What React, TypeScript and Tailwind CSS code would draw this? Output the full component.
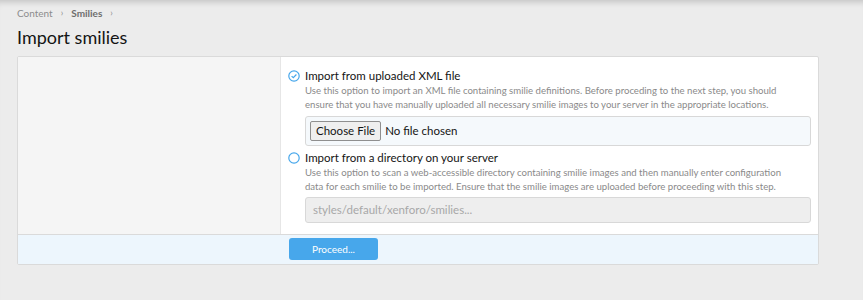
import React from "react";

const font = { fontFamily: 'Lato, "Open Sans", sans-serif' };

const CheckedRadio = () => (
  <svg width="12" height="12" viewBox="0 0 12 12" className="shrink-0">
    <circle cx="6" cy="6" r="5.2" fill="none" stroke="#47a7eb" strokeWidth="1.2" />
    <path d="M3.6 6.1 L5.3 7.7 L8.4 4.5" fill="none" stroke="#47a7eb" strokeWidth="1.2" />
  </svg>
);

const EmptyRadio = () => (
  <svg width="12" height="12" viewBox="0 0 12 12" className="shrink-0">
    <circle cx="6" cy="6" r="5.2" fill="none" stroke="#47a7eb" strokeWidth="1.2" />
  </svg>
);

export default function App() {
  return (
    <div
      className="min-h-[300px] bg-[#ececec] px-[17px] pt-[6px] shadow-[inset_0_7px_6px_-5px_rgba(0,0,0,0.18)]"
      style={font}
    >
      <div className="flex items-center gap-[8px] text-[10px] leading-[14px] text-[#8c8c8c]">
        <span>Content</span>
        <span className="text-[9px]">›</span>
        <span className="font-bold text-[#6e6e6e]">Smilies</span>
        <span className="text-[9px]">›</span>
      </div>
      <h1 className="mt-[5px] text-[18px] leading-[24px] text-[#141414]">Import smilies</h1>

      <div className="mt-[7px] w-[802px] overflow-hidden rounded-[2px] border border-[#dadada] bg-white">
        <div className="flex">
          <div className="w-[263px] shrink-0 border-r border-[#e6e6e6] bg-[#f5f5f5]" />
          <div className="min-w-0 flex-1 pl-[7px] pr-[7px] pt-[11px] pb-[11px]">
            <div className="flex items-center gap-[5px] text-[11.5px] leading-[16px] text-[#141414]">
              <CheckedRadio />
              <span>Import from uploaded XML file</span>
            </div>
            <p className="whitespace-nowrap pl-[17px] text-[9.6px] leading-[14px] text-[#8a8a8a]">
              Use this option to import an XML file containing smilie definitions. Before proceding to the next step, you should
              <br />
              ensure that you have manually uploaded all necessary smilie images to your server in the appropriate locations.
            </p>
            <div className="ml-[17px] mt-[4px] flex h-[30px] items-center gap-[4px] rounded-[3px] border border-[#d8d8d8] bg-[#f5f9fc] pl-[4px] text-[11.5px] text-[#141414]">
              <span className="rounded-[2px] border border-[#8f8f8f] bg-[#efefef] px-[5px] leading-[18px]">Choose File</span>
              <span>No file chosen</span>
            </div>

            <div className="mt-[4px] flex items-center gap-[5px] text-[11.5px] leading-[16px] text-[#141414]">
              <EmptyRadio />
              <span>Import from a directory on your server</span>
            </div>
            <p className="whitespace-nowrap pl-[17px] text-[9.6px] leading-[14px] text-[#8a8a8a]">
              Use this option to scan a web-accessible directory containing smilie images and then manually enter configuration
              <br />
              data for each smilie to be imported. Ensure that the smilie images are uploaded before proceeding with this step.
            </p>
            <div className="ml-[17px] mt-[3px] flex h-[26px] items-center rounded-[3px] border border-[#d8d8d8] bg-[#eeeeee] px-[7px] text-[11.5px] text-[#a8a8a8]">
              styles/default/xenforo/smilies...
            </div>
          </div>
        </div>
        <div className="flex border-t border-[#dadada] bg-[#edf6fd] pt-[3px] pb-[4px] pl-[271px]">
          <button className="h-[22px] w-[89px] rounded-[3px] bg-[#47a7eb] text-[10px] text-white">Proceed...</button>
        </div>
      </div>
    </div>
  );
}
